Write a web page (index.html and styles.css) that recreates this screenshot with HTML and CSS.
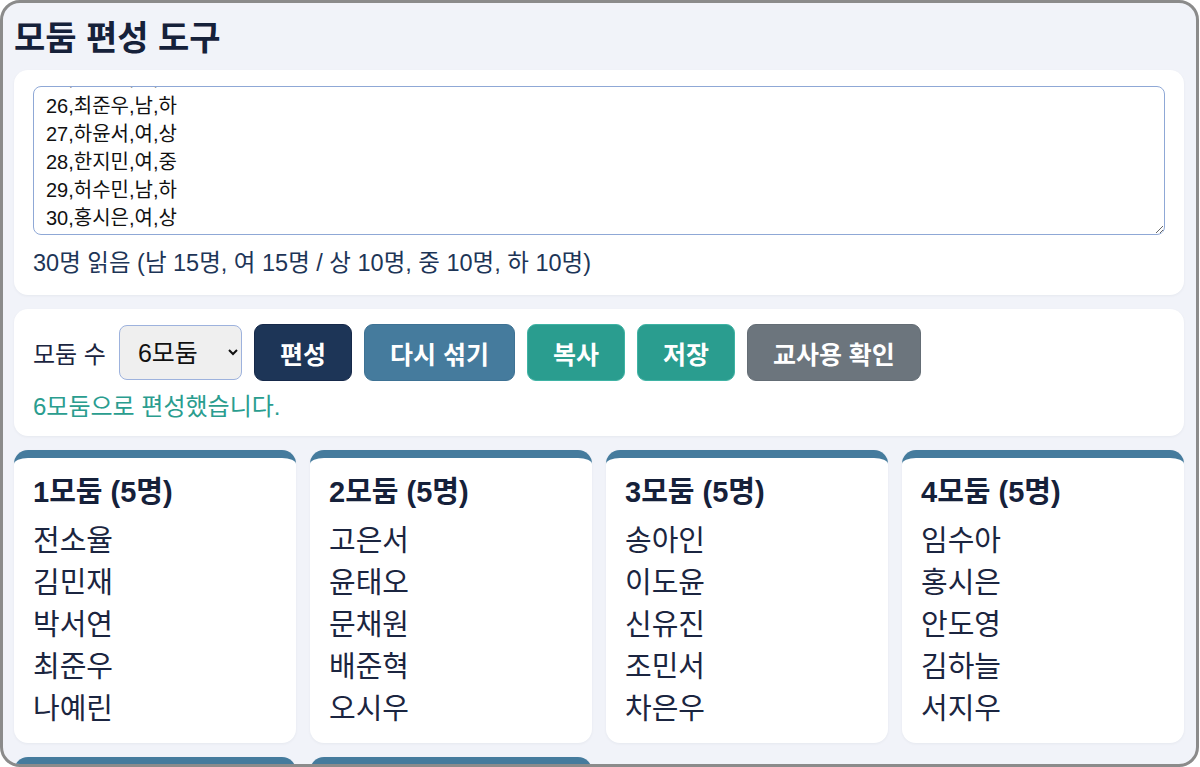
FILE: index.html
```html
<!DOCTYPE html>
<html lang="ko">
<head>
<meta charset="utf-8">
<title>모둠 편성 도구</title>
<link rel="stylesheet" href="styles.css">
</head>
<body>
<div class="frame">
  <h1 class="title">모둠 편성 도구</h1>

  <section class="panel input-panel">
    <textarea id="roster" class="roster" spellcheck="false">1,강하준,남,상
2,고은서,여,중
3,권나연,여,하
4,김민재,남,상
5,김하늘,여,중
6,나예린,여,하
7,남도현,남,중
8,류서아,여,상
9,문채원,여,중
10,박서연,여,상
11,배준혁,남,중
12,백지호,남,하
13,서지우,여,상
14,송아인,여,중
15,신유진,여,하
16,안도영,남,상
17,오시우,남,중
18,유하람,남,하
19,윤태오,남,상
20,이도윤,남,중
21,임수아,여,하
22,전소율,여,상
23,정예준,남,중
24,조민서,남,하
25,차은우,남,하
26,최준우,남,하
27,하윤서,여,상
28,한지민,여,중
29,허수민,남,하
30,홍시은,여,상</textarea>
    <p class="summary">30명 읽음 (남 15명, 여 15명 / 상 10명, 중 10명, 하 10명)</p>
  </section>

  <section class="panel control-panel">
    <div class="controls">
      <label class="count-label" for="count">모둠 수</label>
      <select id="count" class="count-select">
        <option>4모둠</option>
        <option>5모둠</option>
        <option selected>6모둠</option>
        <option>7모둠</option>
      </select>
      <button class="btn btn-navy" type="button">편성</button>
      <button class="btn btn-steel" type="button">다시 섞기</button>
      <button class="btn btn-teal" type="button">복사</button>
      <button class="btn btn-teal" type="button">저장</button>
      <button class="btn btn-gray" type="button">교사용 확인</button>
    </div>
    <p class="status">6모둠으로 편성했습니다.</p>
  </section>

  <div class="groups">
    <article class="group-card">
      <h2 class="group-title">1모둠 (5명)</h2>
      <ul class="members"><li>전소율</li><li>김민재</li><li>박서연</li><li>최준우</li><li>나예린</li></ul>
    </article>
    <article class="group-card">
      <h2 class="group-title">2모둠 (5명)</h2>
      <ul class="members"><li>고은서</li><li>윤태오</li><li>문채원</li><li>배준혁</li><li>오시우</li></ul>
    </article>
    <article class="group-card">
      <h2 class="group-title">3모둠 (5명)</h2>
      <ul class="members"><li>송아인</li><li>이도윤</li><li>신유진</li><li>조민서</li><li>차은우</li></ul>
    </article>
    <article class="group-card">
      <h2 class="group-title">4모둠 (5명)</h2>
      <ul class="members"><li>임수아</li><li>홍시은</li><li>안도영</li><li>김하늘</li><li>서지우</li></ul>
    </article>
    <article class="group-card">
      <h2 class="group-title">5모둠 (5명)</h2>
      <ul class="members"><li>하윤서</li><li>강하준</li><li>류서아</li><li>정예준</li><li>백지호</li></ul>
    </article>
    <article class="group-card">
      <h2 class="group-title">6모둠 (5명)</h2>
      <ul class="members"><li>유하람</li><li>한지민</li><li>허수민</li><li>남도현</li><li>권나연</li></ul>
    </article>
  </div>
</div>
<script src="script.js"></script>
</body>
</html>
```

FILE: styles.css
```css
html, body {
  margin: 0;
  padding: 0;
  background: #ffffff;
}

body {
  font-family: "Liberation Sans", "Noto Sans CJK KR", sans-serif;
  color: #1b2540;
}

.frame {
  box-sizing: border-box;
  height: 767px;
  width: 1199px;
  border: 3px solid #8b8b8b;
  border-radius: 20px;
  overflow: hidden;
  background: #f1f3f9;
  padding: 13px 12px 0 11px;
}

.title {
  margin: 0 0 10px 0;
  font-size: 34px;
  line-height: 44px;
  font-weight: 700;
  color: #16213a;
}

.panel {
  background: #ffffff;
  border-radius: 14px;
  box-shadow: 0 1px 3px rgba(20, 33, 61, 0.05);
}

.input-panel {
  padding: 16px 19px 15px;
}

.roster {
  display: block;
  box-sizing: border-box;
  width: 100%;
  height: 149px;
  margin: 0;
  padding: 8px 12px;
  border: 1.5px solid #8fa8d6;
  border-radius: 8px;
  font-family: "Liberation Sans", "Noto Sans CJK KR", sans-serif;
  font-size: 20px;
  line-height: 28px;
  color: #111111;
  resize: vertical;
  overflow: hidden;
  outline: none;
}

.summary {
  margin: 12px 0 0 0;
  font-size: 23.5px;
  line-height: 33px;
  color: #1d3557;
}

.control-panel {
  margin-top: 14px;
  padding: 15px 19px 13px;
}

.controls {
  display: flex;
  align-items: center;
  gap: 12px;
}

.count-label {
  font-size: 24px;
  color: #1b2540;
  margin-right: 1px;
}

.count-select {
  box-sizing: border-box;
  width: 123px;
  height: 55px;
  padding: 0 6px 0 14px;
  font-family: "Liberation Sans", "Noto Sans CJK KR", sans-serif;
  font-size: 25px;
  color: #111111;
  background-color: #efefef;
  border: 1.5px solid #9db2dd;
  border-radius: 8px;
}

.btn {
  box-sizing: border-box;
  height: 57px;
  padding: 0 25px;
  border: 1px solid transparent;
  border-radius: 9px;
  font-family: "Liberation Sans", "Noto Sans CJK KR", sans-serif;
  font-size: 25px;
  font-weight: 700;
  color: #ffffff;
  cursor: pointer;
}

.btn-navy {
  background: #1d3557;
  border-color: #16294a;
}

.btn-steel {
  background: #457b9d;
  border-color: #3e7294;
}

.btn-teal {
  background: #2a9d8f;
  border-color: #3fb3a4;
}

.btn-gray {
  background: #6c757d;
  border-color: #646d75;
}

.status {
  margin: 9px 0 0 0;
  font-size: 24px;
  line-height: 33px;
  color: #2a9d8f;
}

.groups {
  margin-top: 14px;
  display: grid;
  grid-template-columns: repeat(4, 1fr);
  gap: 14px;
}

.group-card {
  background: #ffffff;
  border-top: 8px solid #457b9d;
  border-radius: 14px;
  padding: 14px 19px 13px;
  box-shadow: 0 1px 3px rgba(20, 33, 61, 0.05);
}

.group-title {
  margin: 0 0 8px 0;
  font-size: 29px;
  line-height: 40px;
  font-weight: 700;
  color: #16213a;
}

.members {
  list-style: none;
  margin: 0;
  padding: 0;
}

.members li {
  font-size: 29px;
  line-height: 42px;
  color: #1b2540;
}
```

FILE: script.js
```js
var roster = document.getElementById('roster');
roster.scrollTop = 703;
```
